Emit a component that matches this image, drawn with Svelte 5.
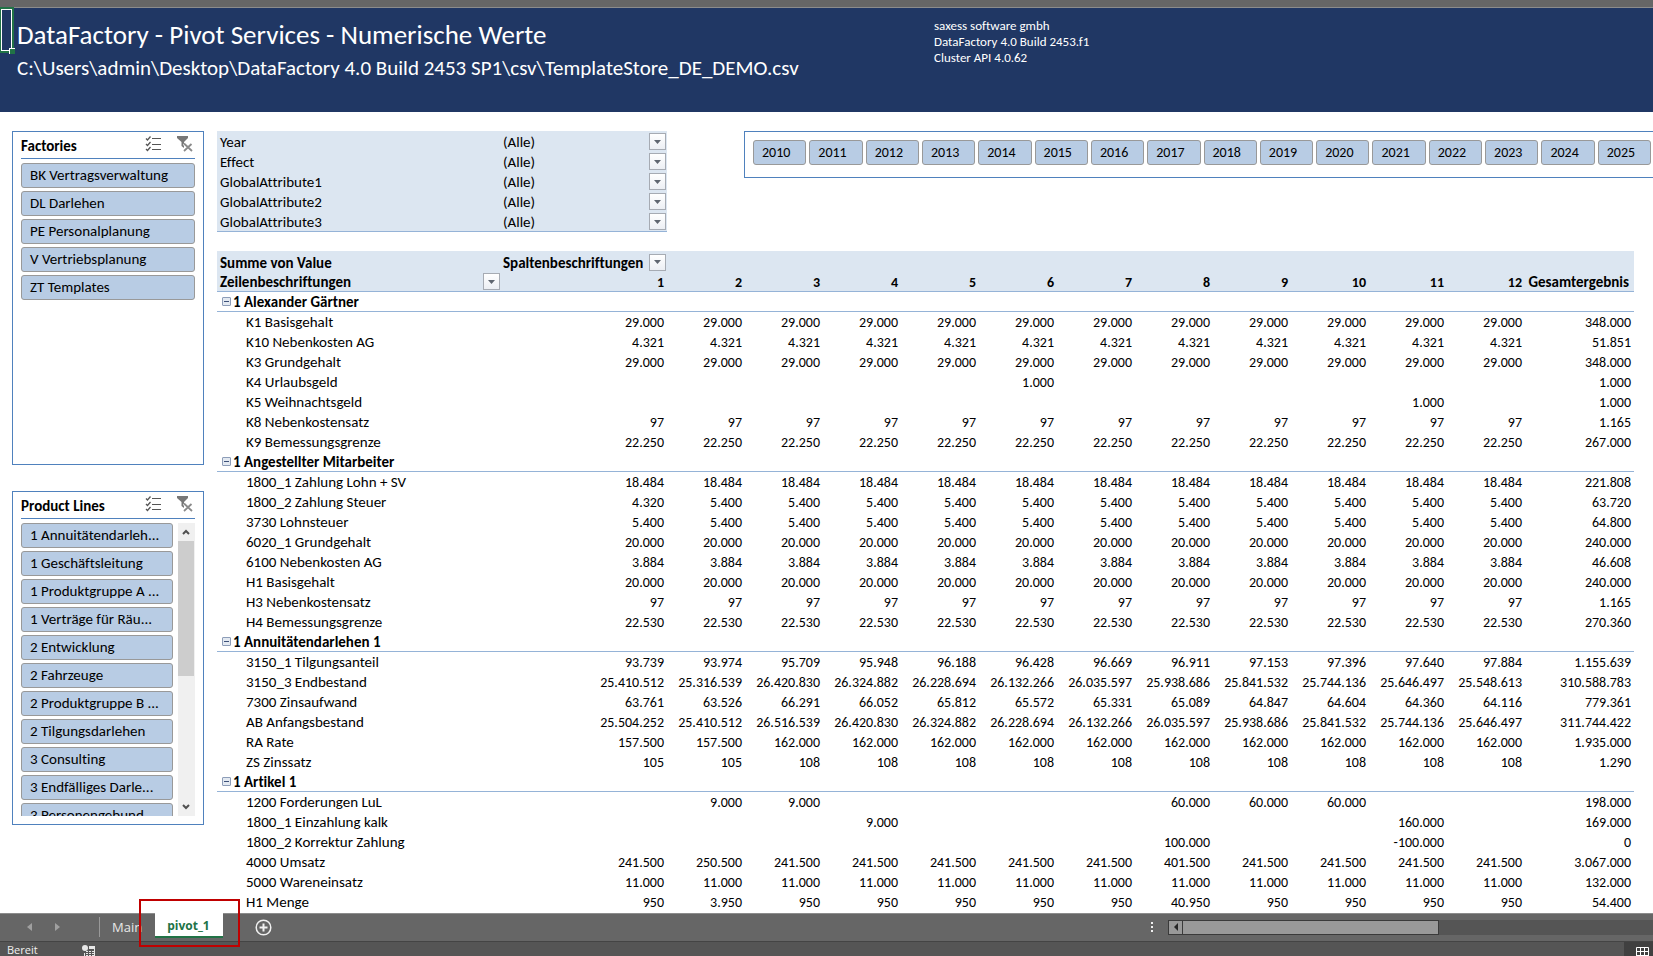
<script>
  const factories = ['BK Vertragsverwaltung', 'DL Darlehen', 'PE Personalplanung', 'V Vertriebsplanung', 'ZT Templates']
  const productLines = [
    '1 Annuitätendarleh...',
    '1 Geschäftsleitung',
    '1 Produktgruppe A ...',
    '1 Verträge für Räu...',
    '2 Entwicklung',
    '2 Fahrzeuge',
    '2 Produktgruppe B ...',
    '2 Tilgungsdarlehen',
    '3 Consulting',
    '3 Endfälliges Darle...',
    '3 Personengebund...'
  ]
  const years = Array.from({ length: 16 }, (_, i) => 2010 + i)
  const months = Array.from({ length: 12 }, (_, i) => i + 1)
  const filters = ['Year', 'Effect', 'GlobalAttribute1', 'GlobalAttribute2', 'GlobalAttribute3']

  const all = (value) => Array(12).fill(value)
  // sparse row: { month: value }
  const only = (cells, rest = '') => months.map((m) => cells[m] ?? rest)

  const groups = [
    {
      name: '1 Alexander Gärtner',
      rows: [
        ['K1 Basisgehalt', all('29.000'), '348.000'],
        ['K10 Nebenkosten AG', all('4.321'), '51.851'],
        ['K3 Grundgehalt', all('29.000'), '348.000'],
        ['K4 Urlaubsgeld', only({ 6: '1.000' }), '1.000'],
        ['K5 Weihnachtsgeld', only({ 11: '1.000' }), '1.000'],
        ['K8 Nebenkostensatz', all('97'), '1.165'],
        ['K9 Bemessungsgrenze', all('22.250'), '267.000']
      ]
    },
    {
      name: '1 Angestellter Mitarbeiter',
      rows: [
        ['1800_1 Zahlung Lohn + SV', all('18.484'), '221.808'],
        ['1800_2 Zahlung Steuer', only({ 1: '4.320' }, '5.400'), '63.720'],
        ['3730 Lohnsteuer', all('5.400'), '64.800'],
        ['6020_1 Grundgehalt', all('20.000'), '240.000'],
        ['6100 Nebenkosten AG', all('3.884'), '46.608'],
        ['H1 Basisgehalt', all('20.000'), '240.000'],
        ['H3 Nebenkostensatz', all('97'), '1.165'],
        ['H4 Bemessungsgrenze', all('22.530'), '270.360']
      ]
    },
    {
      name: '1 Annuitätendarlehen 1',
      rows: [
        ['3150_1 Tilgungsanteil', ['93.739', '93.974', '95.709', '95.948', '96.188', '96.428', '96.669', '96.911', '97.153', '97.396', '97.640', '97.884'], '1.155.639'],
        ['3150_3 Endbestand', ['25.410.512', '25.316.539', '26.420.830', '26.324.882', '26.228.694', '26.132.266', '26.035.597', '25.938.686', '25.841.532', '25.744.136', '25.646.497', '25.548.613'], '310.588.783'],
        ['7300 Zinsaufwand', ['63.761', '63.526', '66.291', '66.052', '65.812', '65.572', '65.331', '65.089', '64.847', '64.604', '64.360', '64.116'], '779.361'],
        ['AB Anfangsbestand', ['25.504.252', '25.410.512', '26.516.539', '26.420.830', '26.324.882', '26.228.694', '26.132.266', '26.035.597', '25.938.686', '25.841.532', '25.744.136', '25.646.497'], '311.744.422'],
        ['RA Rate', only({ 1: '157.500', 2: '157.500' }, '162.000'), '1.935.000'],
        ['ZS Zinssatz', only({ 1: '105', 2: '105' }, '108'), '1.290']
      ]
    },
    {
      name: '1 Artikel 1',
      rows: [
        ['1200 Forderungen LuL', only({ 2: '9.000', 3: '9.000', 8: '60.000', 9: '60.000', 10: '60.000' }), '198.000'],
        ['1800_1 Einzahlung kalk', only({ 4: '9.000', 11: '160.000' }), '169.000'],
        ['1800_2 Korrektur Zahlung', only({ 8: '100.000', 11: '-100.000' }), '0'],
        ['4000 Umsatz', only({ 2: '250.500', 8: '401.500' }, '241.500'), '3.067.000'],
        ['5000 Wareneinsatz', all('11.000'), '132.000'],
        ['H1 Menge', only({ 2: '3.950', 8: '40.950' }, '950'), '54.400']
      ]
    }
  ]
</script>

{#snippet dropButton(label)}
  <button class="drop" aria-label={label}>
    <svg width="7" height="4" viewBox="0 0 7 4"><path d="M0 0h7L3.5 4z" fill="#5f6670" /></svg>
  </button>
{/snippet}

{#snippet slicerHead(title)}
  <div class="slicer-head">
    <h2>{title}</h2>
    <button class="tool" aria-label="Mehrfachauswahl">
      <svg width="17" height="16" viewBox="0 0 17 16" fill="none" stroke="#555">
        <path d="M7 2.5h9M7 8.5h9M7 13.5h9" />
        <path d="M1 2.5l1.5 1.5L5.5.5M1 8l1.5 1.5L5.5 6M1 13l1.5 1.5L5.5 11" stroke-width="1.3" />
      </svg>
    </button>
    <button class="tool" aria-label="Filter löschen">
      <svg width="16" height="16" viewBox="0 0 16 16">
        <path d="M0 0h11v2L7 6v6L4.5 10V6L0 2z" fill="#777" />
        <path d="M7 7.5l8 7.5M15 7.5L6.5 15" stroke="#fff" stroke-width="3.5" />
        <path d="M7 7.5l8 7.5M14.5 8L7 15" stroke="#8a8a8a" stroke-width="1.8" />
      </svg>
    </button>
  </div>
{/snippet}

<div class="app">
  <div class="ribbon-edge"></div>

  <header>
    <div class="cell-cursor"></div>
    <div class="titles">
      <h1>DataFactory - Pivot Services - Numerische Werte</h1>
      <p>C:\Users\admin\Desktop\DataFactory 4.0 Build 2453 SP1\csv\TemplateStore_DE_DEMO.csv</p>
    </div>
    <div class="version">
      <div>saxess software gmbh</div>
      <div>DataFactory 4.0 Build 2453.f1</div>
      <div>Cluster API 4.0.62</div>
    </div>
  </header>

  <main>
    <aside>
      <section class="slicer">
        {@render slicerHead('Factories')}
        <div class="items">
          {#each factories as item}
            <button class="item">{item}</button>
          {/each}
        </div>
      </section>
      <section class="slicer">
        {@render slicerHead('Product Lines')}
        <div class="scroller">
          <div class="items">
            {#each productLines as item}
              <button class="item">{item}</button>
            {/each}
          </div>
          <div class="vscroll">
            <button aria-label="Nach oben">
              <svg width="8" height="6" viewBox="0 0 8 6"><path d="M1 5l3-3 3 3" fill="none" stroke="#505050" stroke-width="2" /></svg>
            </button>
            <div class="vthumb"></div>
            <button aria-label="Nach unten">
              <svg width="8" height="6" viewBox="0 0 8 6"><path d="M1 1l3 3 3-3" fill="none" stroke="#505050" stroke-width="2" /></svg>
            </button>
          </div>
        </div>
      </section>
    </aside>

    <div class="content">
      <div class="top">
        <div class="filters">
          {#each filters as filter}
            <div class="filter">
              <span class="filter-name">{filter}</span>
              <span class="filter-value">(Alle)</span>
              {@render dropButton(filter)}
            </div>
          {/each}
        </div>
        <div class="years">
          {#each years as year}
            <button class="item year">{year}</button>
          {/each}
        </div>
      </div>

      <table>
        <colgroup>
          <col class="col-label" />
          <col class="col-first" />
          {#each months.slice(1) as m}
            <col />
          {/each}
          <col class="col-total" />
        </colgroup>
        <thead>
          <tr>
            <th>Summe von Value</th>
            <th class="with-button">
              <div class="with-drop"><span>Spaltenbeschriftungen</span>{@render dropButton('Spaltenbeschriftungen')}</div>
            </th>
            <th colspan="12"></th>
          </tr>
          <tr>
            <th class="with-button"><div class="with-drop row-head"><span>Zeilenbeschriftungen</span>{@render dropButton('Zeilenbeschriftungen')}</div></th>
            {#each months as month}
              <th class="num">{month}</th>
            {/each}
            <th class="total">Gesamtergebnis</th>
          </tr>
        </thead>
        <tbody>
          {#each groups as group}
            <tr class="group">
              <th colspan="14">
                <div class="group-name">
                  <button class="collapse" aria-label="Reduzieren"></button>
                  <span>{group.name}</span>
                </div>
              </th>
            </tr>
            {#each group.rows as [label, values, total]}
              <tr>
                <td class="label">{label}</td>
                {#each values as value}
                  <td class="num">{value}</td>
                {/each}
                <td class="num">{total}</td>
              </tr>
            {/each}
          {/each}
        </tbody>
      </table>
    </div>
  </main>

  <nav>
    <div class="tab-arrows">
      <button aria-label="Vorheriges Blatt">
        <svg width="5" height="8" viewBox="0 0 5 8"><path d="M5 0v8L0 4z" fill="#a0a0a0" /></svg>
      </button>
      <button aria-label="Nächstes Blatt">
        <svg width="5" height="8" viewBox="0 0 5 8"><path d="M0 0v8l5-4z" fill="#a0a0a0" /></svg>
      </button>
    </div>
    <button class="tab">Main</button>
    <div class="tab-current">
      <button class="tab active">pivot_1</button>
      <div class="marker"></div>
    </div>
    <button class="add" aria-label="Neues Blatt">
      <svg width="17" height="17" viewBox="0 0 17 17" fill="none" stroke="#f0f0f0">
        <circle cx="8.5" cy="8.5" r="7.3" stroke-width="1.5" />
        <path d="M8.5 4.5v8M4.5 8.5h8" stroke-width="2" />
      </svg>
    </button>
    <div class="hscroll-area">
      <svg width="2" height="10" viewBox="0 0 2 10"><path d="M0 0h2v2H0zM0 4h2v2H0zM0 8h2v2H0z" fill="#f0f0f0" /></svg>
      <div class="hscroll">
        <button aria-label="Nach links">
          <svg width="4" height="8" viewBox="0 0 4 8"><path d="M4 0v8L0 4z" fill="#262626" /></svg>
        </button>
        <div class="hthumb"></div>
      </div>
    </div>
  </nav>

  <footer>
    <span>Bereit</span>
    <svg class="macro" width="14" height="15" viewBox="0 0 14 15">
      <path d="M7 1.5h5.5v12h-10V8" fill="none" stroke="#e6e6e6" />
      <path d="M7 1h6v3H7z" fill="#e6e6e6" />
      <path d="M4 6.5h8M4 8.5h8M4 10.5h8" stroke="#e6e6e6" stroke-dasharray="2 1" />
      <circle cx="3" cy="3" r="3" fill="#e6e6e6" />
    </svg>
    <button class="view" aria-label="Normalansicht">
      <svg width="13" height="13" viewBox="0 0 13 13" fill="none" stroke="#fff"><path d="M.5.5h12v12H.5zM4.5 0v13M8.5 0v13M0 4.5h13M0 8.5h13" /></svg>
    </button>
  </footer>
</div>

<style>
  :global(body) {
    margin: 0;
    background: #fff;
  }

  .app {
    height: 100vh;
    display: flex;
    flex-direction: column;
    overflow: hidden;
    font: 15px/20px Calibri, Carlito, Lato, sans-serif;
    font-variant-ligatures: none;
    color: #000;
  }

  .app > * {
    flex: none;
  }

  button {
    padding: 0;
    border: 0;
    background: none;
    font: inherit;
    font-variant-ligatures: none;
    color: inherit;
  }

  svg {
    display: block;
  }

  h1, h2, p {
    margin: 0;
    font-weight: normal;
  }

  .ribbon-edge {
    height: 7px;
    background: #666;
    border-bottom: 1px solid #8c8c8c;
  }

  header {
    height: 104px;
    display: flex;
    position: relative;
    background: #203764;
    color: #fff;
  }

  /* selected cell with its fill handle */
  .cell-cursor {
    position: absolute;
    left: 0;
    top: 0;
    width: 9px;
    height: 40px;
    border: 1px solid #fff;
    outline: 2px solid #217346;
    margin: 1px;
  }

  .cell-cursor::after {
    content: '';
    position: absolute;
    right: -4px;
    bottom: -4px;
    width: 5px;
    height: 5px;
    background: #217346;
    border: solid #fff;
    border-width: 1px 0 0 1px;
  }

  .titles {
    width: 917px;
    padding: 11px 0 0 17px;
    white-space: nowrap;
  }

  h1 {
    font-size: 27px;
    line-height: 32px;
  }

  .titles p {
    font-size: 21px;
    line-height: 34px;
  }

  .version {
    padding-top: 10px;
    font-size: 13px;
    line-height: 16px;
  }

  main {
    flex: 1 0 auto;
    display: flex;
    gap: 13px;
    padding: 19px 0 1px 12px;
  }

  aside {
    display: flex;
    flex-direction: column;
    gap: 26px;
    width: 192px;
    flex: none;
  }

  .slicer {
    height: 334px;
    box-sizing: border-box;
    border: 1px solid #4f81bd;
    padding: 0 8px;
  }

  .slicer-head {
    display: flex;
    height: 26px;
    border-bottom: 1px solid #4f81bd;
    margin-bottom: 4px;
  }

  h2 {
    flex: 1;
    font-size: 15px;
    font-weight: bold;
    line-height: 28px;
  }

  .tool {
    width: 18px;
    height: 16px;
    margin: 4px 0 0 14px;
  }

  .items {
    flex: 1;
    display: flex;
    flex-direction: column;
    gap: 3px;
  }

  .item {
    height: 25px;
    flex: none;
    box-sizing: border-box;
    padding: 0 8px 2px;
    border: 1px solid #999;
    border-radius: 3px;
    background: #b8cce4;
    text-align: left;
    white-space: nowrap;
  }

  .scroller {
    display: flex;
    gap: 5px;
    height: 293px;
    overflow: hidden;
  }

  .vscroll {
    width: 17px;
    display: flex;
    flex-direction: column;
    background: #f0f0f0;
  }

  .vscroll button {
    height: 18px;
    padding-left: 4px;
  }

  .vthumb {
    width: 16px;
    height: 135px;
    margin-bottom: auto;
    background: #cdcdcd;
  }

  .content {
    flex: 1;
    min-width: 0;
  }

  .top {
    display: flex;
    align-items: flex-start;
    gap: 77px;
    margin-bottom: 19px;
  }

  .filters {
    width: 450px;
    box-sizing: border-box;
    background: #dce6f1;
    border-top: 1px solid #dce6f1;
    border-bottom: 1px solid #95b3d7;
    height: 101px;
  }

  .filter {
    display: flex;
    height: 20px;
    padding: 0 1px 0 3px;
  }

  .filter-name {
    width: 283px;
  }

  .filter-value {
    flex: 1;
  }

  .drop {
    flex: none;
    width: 17px;
    height: 17px;
    margin-top: 1px;
    display: flex;
    align-items: center;
    justify-content: center;
    border: 1px solid #a6abb3;
    background: linear-gradient(#fff, #eceff4);
  }

  .years {
    flex: 1;
    display: grid;
    grid-template-columns: repeat(16, 1fr);
    gap: 3px;
    padding: 8px 2px 12px 8px;
    border: 1px solid #4f81bd;
    border-right: 0;
  }

  .year {
    padding-bottom: 0;
    font-size: 14px;
  }

  table {
    width: calc(100% - 19px);
    table-layout: fixed;
    border-collapse: separate;
    border-spacing: 0;
    border-top: 1px solid #dce6f1;
  }

  .col-label {
    width: 284px;
  }

  .col-first {
    width: 166px;
  }

  .col-total {
    width: 109px;
  }

  th, td {
    height: 20px;
    box-sizing: border-box;
    padding: 0 3px;
    line-height: 19px;
    text-align: left;
    white-space: nowrap;
  }

  thead th {
    padding-top: 2px;
    line-height: 17px;
    background: #dce6f1;
  }

  thead tr:last-child th,
  .group th {
    border-bottom: 1px solid #95b3d7;
  }

  thead .with-button {
    padding: 0 1px 0 2px;
  }

  .with-drop {
    display: flex;
    justify-content: space-between;
    height: 19px;
    line-height: 21px;
  }

  .row-head {
    padding-left: 1px;
  }

  .num {
    font-size: 14px;
    text-align: right;
  }

  thead .total {
    padding-right: 5px;
    text-align: right;
  }

  .label {
    padding-left: 29px;
  }

  .group-name {
    display: flex;
    gap: 2px;
    height: 19px;
    padding-left: 2px;
    line-height: 21px;
  }

  .collapse {
    width: 9px;
    height: 9px;
    margin-top: 5px;
    box-sizing: border-box;
    border: 1px solid #8d9db8;
    border-radius: 1px;
    background: linear-gradient(#3c5078, #3c5078) center / 5px 1px no-repeat, #e3e9f1;
  }

  nav {
    display: flex;
    height: 28px;
    align-items: center;
    background: #666;
    border-bottom: 1px solid #444;
    box-shadow: inset 0 1px #8c8c8c;
    font: 13px/20px "Open Sans", "Noto Sans", sans-serif;
    color: #e6e6e6;
  }

  .tab-arrows {
    display: flex;
    gap: 23px;
    width: 100px;
    height: 20px;
    box-sizing: border-box;
    padding-left: 27px;
    border-right: 1px solid #999;
    flex: none;
  }

  .tab {
    padding: 0 13px 0 12px;
  }

  .tab-current {
    position: relative;
    align-self: stretch;
  }

  .active {
    height: 25px;
    padding-top: 2px;
    border-bottom: 2px solid #217346;
    background: #fff;
    font-size: 12px;
    font-weight: bold;
    color: #217346;
  }

  /* red frame round the current sheet */
  .marker {
    position: absolute;
    left: -16px;
    right: -17px;
    top: -14px;
    height: 44px;
    border: 2px solid #c00000;
  }

  .add {
    margin-left: 32px;
  }

  .hscroll-area {
    display: flex;
    align-items: center;
    gap: 15px;
    width: 502px;
    margin-left: auto;
  }

  .hscroll {
    flex: 1;
    display: flex;
    height: 15px;
    background: #555;
  }

  .hscroll button {
    width: 14px;
    display: flex;
    align-items: center;
    justify-content: center;
    box-sizing: border-box;
    border: 1px solid #3a3a3a;
    border-right: 0;
    background: #999;
  }

  .hthumb {
    width: 255px;
    border: 1px solid #3a3a3a;
    background: #999;
  }

  footer {
    display: flex;
    height: 22px;
    padding-left: 7px;
    background: #555;
    font: 11px/16px "Open Sans", "Noto Sans", sans-serif;
    color: #f0f0f0;
  }

  footer span {
    width: 75px;
  }

  .macro {
    margin-top: 3px;
  }

  .view {
    width: 29px;
    padding-left: 12px;
    margin-left: auto;
    box-sizing: border-box;
    background: #404040;
  }
</style>
